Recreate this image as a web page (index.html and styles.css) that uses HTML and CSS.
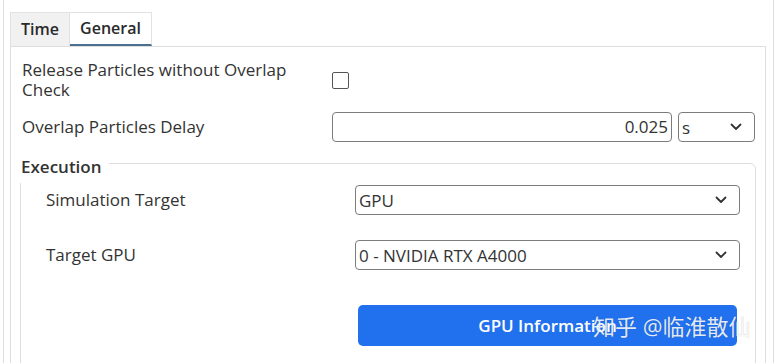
FILE: index.html
```html
<!DOCTYPE html>
<html lang="en">
<head>
    <meta charset="UTF-8" />
    <meta name="viewport" content="width=device-width, initial-scale=1.0" />
    <title>Particle Settings</title>
    <link rel="stylesheet" href="styles.css">
</head>
<body>
    <div class="frame">
        <div class="tabs">
            <div class="tab">Time</div>
            <div class="tab active">General</div>
        </div>

        <div class="panel">
            <div class="row first">
                <div class="label">Release Particles without Overlap<br />Check</div>
                <div class="checkbox"></div>
            </div>

            <div class="row">
                <div class="label">Overlap Particles Delay</div>
                <div class="input">0.025</div>
                <div class="select unit">
                    <span>s</span>
                    <svg class="chevron" width="12" height="8" viewBox="0 0 12 8"><path d="M1.5 1.5 L6 6 L10.5 1.5" fill="none" stroke="#333" stroke-width="1.8" stroke-linecap="round" stroke-linejoin="round"/></svg>
                </div>
            </div>

            <div class="group">
                <div class="group-title">Execution</div>

                <div class="group-row">
                    <div class="label">Simulation Target</div>
                    <div class="select wide">
                        <span>GPU</span>
                        <svg class="chevron" width="12" height="8" viewBox="0 0 12 8"><path d="M1.5 1.5 L6 6 L10.5 1.5" fill="none" stroke="#333" stroke-width="1.8" stroke-linecap="round" stroke-linejoin="round"/></svg>
                    </div>
                </div>

                <div class="group-row second">
                    <div class="label">Target GPU</div>
                    <div class="select wide">
                        <span>0 - NVIDIA RTX A4000</span>
                        <svg class="chevron" width="12" height="8" viewBox="0 0 12 8"><path d="M1.5 1.5 L6 6 L10.5 1.5" fill="none" stroke="#333" stroke-width="1.8" stroke-linecap="round" stroke-linejoin="round"/></svg>
                    </div>
                </div>

                <button class="button">GPU Information</button>
            </div>
        </div>

        <div class="watermark">知乎 @临淮散仙</div>
    </div>
</body>
</html>
```

FILE: styles.css
```css
body {
    margin: 0;
    background: #fff;
    font-family: 'Open Sans', 'Noto Sans', 'Noto Sans CJK SC', sans-serif;
    font-size: 17px;
    color: #333;
    overflow: hidden;
}

.frame {
    position: relative;
    box-sizing: border-box;
    margin-left: 3px;
    width: 771px;
    height: 363px;
    padding: 12px 7px 0 6px;
    border-left: 1px solid #dedede;
    border-right: 1px solid #dedede;
    overflow: hidden;
}

.tabs {
    display: flex;
    height: 34px;
}

.tab {
    width: 60px;
    box-sizing: border-box;
    background: #f1f1f1;
    border: 1px solid #e2e2e2;
    border-bottom: none;
    font-weight: 600;
    font-size: 16px;
    line-height: 32px;
    text-align: center;
    color: #2a2a2a;
}

.tab.active {
    width: 82px;
    background: #fff;
    border-left: none;
    border-bottom: 2px solid #4d6f8f;
    line-height: 31px;
}

.panel {
    border: 1px solid #dedede;
    height: 400px;
    padding: 13px 9px 0 11px;
}

.row {
    display: flex;
    align-items: center;
    margin-top: 12px;
    height: 30px;
}

.row.first {
    margin-top: 0;
    height: 40px;
}

.label {
    width: 310px;
    flex: none;
    line-height: 20px;
}

.checkbox {
    width: 15px;
    height: 15px;
    border: 1.5px solid #555;
    border-radius: 2px;
}

.input {
    width: 340px;
    height: 30px;
    box-sizing: border-box;
    border: 1px solid #7c7c7c;
    border-radius: 4px;
    padding-right: 3px;
    text-align: right;
    line-height: 28px;
}

.select {
    display: flex;
    align-items: center;
    justify-content: space-between;
    height: 30px;
    box-sizing: border-box;
    border: 1px solid #7c7c7c;
    border-radius: 4px;
    padding: 0 12px 0 3px;
}

.select.unit {
    width: 77px;
    margin-left: 6px;
}

.select.wide {
    width: 385px;
}

.chevron {
    flex: none;
}

.group {
    margin: 21px 0 0 -2px;
    border: 1px solid #dedede;
    border-radius: 6px;
    height: 300px;
    padding: 0 14px 0 25px;
}

.group-title {
    display: block;
    width: fit-content;
    background: #fff;
    margin: -9px 0 0 -26px;
    padding: 0 7px 4px 1px;
    font-weight: 600;
    line-height: 24px;
}

.group-row {
    display: flex;
    align-items: center;
    margin-top: 2px;
    height: 30px;
}

.group-row .label {
    width: 309px;
}

.group-row.second {
    margin-top: 25px;
}

.button {
    display: block;
    margin: 35px 0 0 312px;
    width: 379px;
    height: 41px;
    border: none;
    border-radius: 5px;
    background-color: #2171ee;
    color: #fff;
    font-family: inherit;
    font-size: 17px;
    font-weight: 600;
}

.watermark {
    position: absolute;
    left: 589px;
    top: 311px;
    font-size: 22px;
    line-height: 30px;
    color: rgba(255, 255, 255, 0.88);
    text-shadow: 0 0 1px rgba(0, 0, 0, 0.25);
}
```
